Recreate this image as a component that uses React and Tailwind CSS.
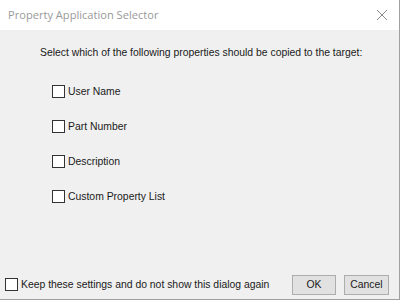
import React, { useState } from "react";

const Box = ({ checked, onChange }) => (
  <span
    onClick={onChange}
    className="w-[13px] h-[13px] border border-[#333333] bg-white shrink-0 flex items-center justify-center"
  >
    {checked && <span className="text-[10px] leading-none">✓</span>}
  </span>
);

const PropertySelector = () => {
  const [props, setProps] = useState({
    userName: false,
    partNumber: false,
    description: false,
    customList: false,
  });
  const [keep, setKeep] = useState(false);

  const items = [
    ["userName", "User Name"],
    ["partNumber", "Part Number"],
    ["description", "Description"],
    ["customList", "Custom Property List"],
  ];

  return (
    <div className="w-[400px] h-[300px] flex flex-col border-r border-b border-[#a0a0a0] font-['Liberation_Sans',Arial,sans-serif] text-[10.4px] text-[#1a1a1a]">
      {/* Title bar */}
      <div className="h-[30px] bg-white flex items-center justify-between pl-[8px] pr-[10px] shrink-0">
        <span className="font-['Open_Sans',sans-serif] text-[11.1px] text-[#999999]">
          Property Application Selector
        </span>
        <svg width="12" height="12" viewBox="0 0 12 12" className="mr-[1px]">
          <path d="M1 1 L11 11 M11 1 L1 11" stroke="#8a8a8a" strokeWidth="1" />
        </svg>
      </div>

      {/* Body */}
      <div className="flex-1 bg-[#f0f0f0] flex flex-col">
        <p className="pl-[40px] pt-[15px] h-[44px]">
          Select which of the following properties should be copied to the target:
        </p>

        <div className="flex flex-col gap-[22px] pl-[52px] pt-[11px]">
          {items.map(([key, label]) => (
            <label key={key} className="flex items-center gap-[3px] h-[13px]">
              <Box
                checked={props[key]}
                onChange={() => setProps({ ...props, [key]: !props[key] })}
              />
              <span>{label}</span>
            </label>
          ))}
        </div>

        {/* Footer */}
        <div className="mt-auto flex items-center justify-between pl-[5px] pr-[10px] pb-[2px] h-[26px]">
          <label className="flex items-center gap-[3px]">
            <Box checked={keep} onChange={() => setKeep(!keep)} />
            <span>Keep these settings and do not show this dialog again</span>
          </label>
          <div className="flex gap-[8px]">
            <button className="w-[44px] h-[20px] bg-[#e1e1e1] border border-[#adadad]">
              OK
            </button>
            <button className="w-[45px] h-[20px] bg-[#e1e1e1] border border-[#adadad]">
              Cancel
            </button>
          </div>
        </div>
      </div>
    </div>
  );
};

export default PropertySelector;
